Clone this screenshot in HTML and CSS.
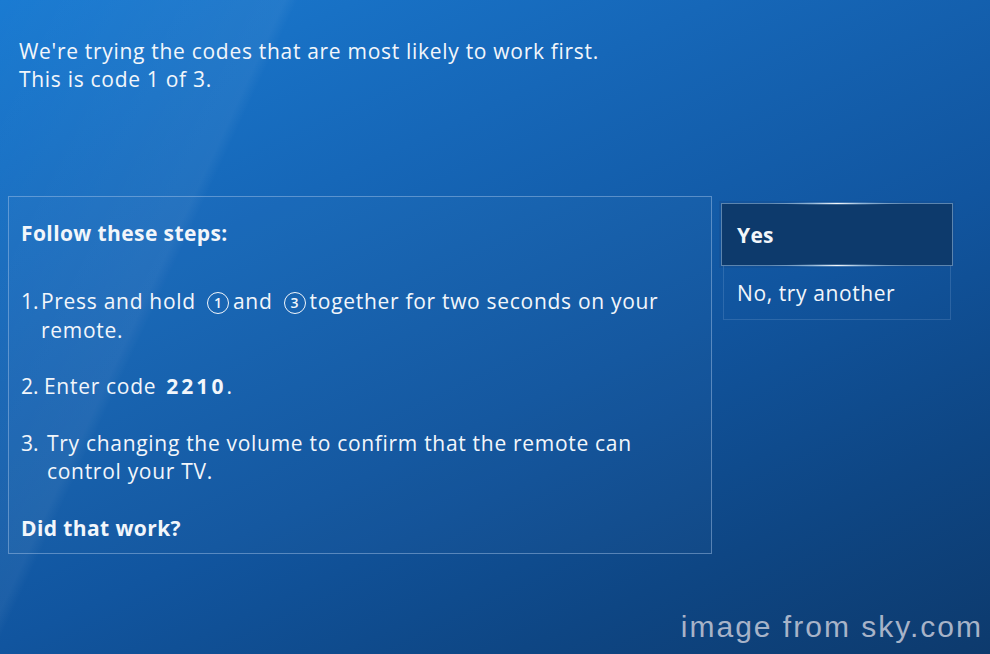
FILE: index.html
```html
<!DOCTYPE html>
<html lang="en">
<head>
<meta charset="utf-8">
<title>Remote setup</title>
<link rel="stylesheet" href="styles.css">
</head>
<body>
<div class="screen">
  <p class="intro">We're trying the codes that are most likely to work first.<br>This is code 1 of 3.</p>
  <div class="main">
    <section class="panel">
      <h2 class="heading">Follow these steps:</h2>
      <div class="step step-1"><span class="num">1.</span><span class="body">Press and hold <span class="key">1</span>and <span class="key">3</span>together for two seconds on your remote.</span></div>
      <div class="step step-2"><span class="num">2.</span><span class="body">Enter code <b class="code">2210</b>.</span></div>
      <div class="step step-3"><span class="num">3.</span><span class="body">Try changing the volume to confirm that the remote can control your TV.</span></div>
      <h2 class="heading question">Did that work?</h2>
    </section>
    <div class="options">
      <div class="option selected">Yes</div>
      <div class="option">No, try another</div>
    </div>
  </div>
  <div class="credit">image from sky.com</div>
</div>
</body>
</html>
```
FILE: styles.css
```css
html, body {
  margin: 0;
  padding: 0;
}
body {
  width: 990px;
  height: 654px;
  overflow: hidden;
  font-family: "Open Sans", "Noto Sans", sans-serif;
  color: #f2f6fb;
}
.screen {
  position: relative;
  width: 990px;
  height: 654px;
  box-sizing: border-box;
  padding-top: 37px;
  background:
    linear-gradient(115deg, rgba(255,255,255,0) 0%, rgba(255,255,255,0.05) 22%, rgba(255,255,255,0) 23%),
    linear-gradient(155deg, #1a7bd2 0%, #1667b8 30%, #11559f 58%, #0e4684 80%, #0d3a6d 100%);
}
.intro {
  margin: 0 0 0 19px;
  font-size: 21px;
  line-height: 28px;
  letter-spacing: 0.7px;
}
.main {
  display: flex;
  align-items: flex-start;
  margin-top: 103px;
  padding-left: 8px;
}
.panel {
  width: 704px;
  height: 358px;
  box-sizing: border-box;
  border: 1px solid rgba(170, 200, 235, 0.45);
  padding: 22px 12px 0 12px;
  background: rgba(255,255,255,0.02);
}
.heading {
  margin: 0;
  font-size: 21px;
  font-weight: 700;
  line-height: 29px;
  letter-spacing: 0.4px;
}
.step {
  display: flex;
  font-size: 21px;
  line-height: 29px;
  margin-top: 27px;
  letter-spacing: 0.7px;
}
.step-1 {
  margin-top: 39px;
}
.step-3 { line-height: 28px; margin-top: 28px; }
.num {
  flex: none;
  width: 20px;
  letter-spacing: 0;
}
.step-3 .num { width: 26px; }
.step-2 .num { width: 23px; }
.body {
  flex: 1;
  padding-right: 10px;
}
.key {
  display: inline-block;
  width: 22px;
  height: 22px;
  box-sizing: border-box;
  border: 1.5px solid #f2f6fb;
  border-radius: 50%;
  font-size: 14px;
  font-weight: 600;
  line-height: 19px;
  text-align: center;
  letter-spacing: 0;
  margin: 0 4px 0 5px;
  vertical-align: 1px;
}
.code {
  font-weight: 700;
  letter-spacing: 3px;
  margin-left: 4px;
}
.question {
  margin-top: 29px;
}
.options {
  display: flex;
  flex-direction: column;
  margin-left: 10px;
  margin-top: 7px;
}
.option {
  position: relative;
  box-sizing: border-box;
  width: 228px;
  height: 54px;
  margin-left: 1px;
  padding-left: 13px;
  display: flex;
  align-items: center;
  font-size: 21px;
  letter-spacing: 0.6px;
  border: 1px solid rgba(170, 200, 235, 0.18);
  border-top: none;
}
.option.selected {
  width: 232px;
  height: 63px;
  margin-left: -1px;
  padding-left: 15px;
  font-weight: 700;
  letter-spacing: 0.3px;
  background: #0d3a6c;
  border: 1px solid rgba(170, 205, 240, 0.5);
  box-shadow: 0 0 0 2px rgba(20, 80, 150, 0.6);
}
.option.selected::before,
.option.selected::after {
  content: "";
  position: absolute;
  left: 50%;
  width: 140px;
  height: 3px;
  margin-left: -70px;
  border-radius: 50%;
  background: radial-gradient(ellipse at center, rgba(255,255,255,0.95) 0%, rgba(200,230,255,0.5) 25%, rgba(160,200,240,0) 70%);
}
.option.selected::before { top: -2px; }
.option.selected::after { bottom: -2px; }
.credit {
  position: absolute;
  right: 7px;
  bottom: 10px;
  font-family: "Liberation Sans", Arial, sans-serif;
  font-size: 30px;
  color: #a7b3c8;
  letter-spacing: 2px;
}
```
